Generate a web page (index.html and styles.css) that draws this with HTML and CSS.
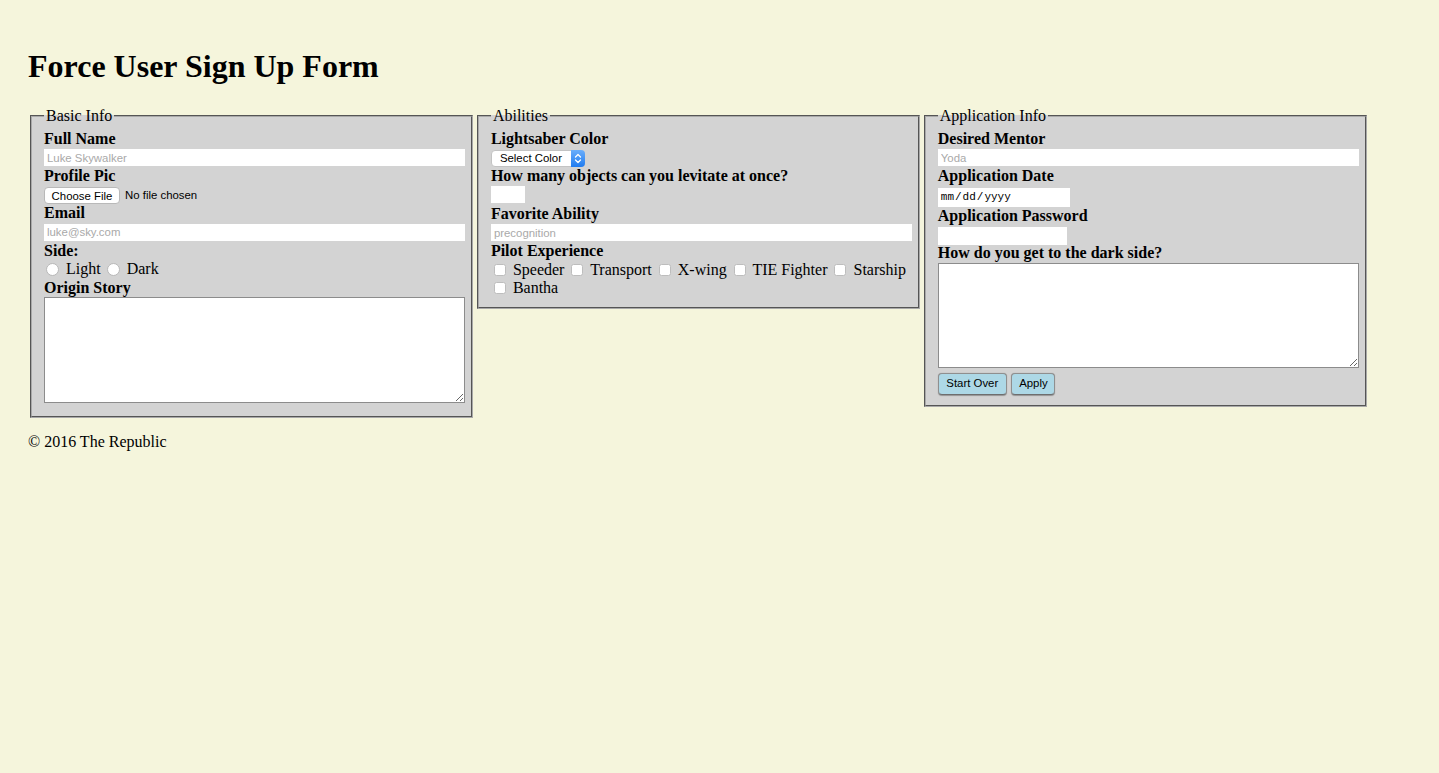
FILE: index.html
```html
<!DOCTYPE html>
<html lang="en">
<head>
<meta charset="utf-8">
<title>Force User Sign Up Form</title>
<link rel="stylesheet" href="styles.css">
</head>
<body>
<h1 class="title">Force User Sign Up Form</h1>
<form class="form">
  <fieldset class="group group-basic">
    <legend class="legend">Basic Info</legend>
    <label class="lbl" for="fullname">Full Name</label>
    <div class="row row-text"><input class="txt" id="fullname" type="text" placeholder="Luke Skywalker"></div>
    <label class="lbl">Profile Pic</label>
    <div class="row row-file"><button type="button" class="filebtn">Choose File</button><span class="filename">No file chosen</span></div>
    <label class="lbl" for="email">Email</label>
    <div class="row row-text"><input class="txt" id="email" type="email" placeholder="luke@sky.com"></div>
    <label class="lbl">Side:</label>
    <div class="opts"><input class="radio" type="radio" name="side" id="light"> <label for="light" class="optlbl">Light</label> <input class="radio" type="radio" name="side" id="dark"> <label for="dark" class="optlbl">Dark</label></div>
    <label class="lbl" for="origin">Origin Story</label>
    <textarea class="area area-origin" id="origin"></textarea>
  </fieldset>

  <fieldset class="group group-abilities">
    <legend class="legend">Abilities</legend>
    <label class="lbl" for="color">Lightsaber Color</label>
    <div class="row row-select">
      <span class="selectwrap">
        <select class="sel" id="color"><option>Select Color</option><option>Blue</option><option>Green</option><option>Red</option></select>
        <svg class="stepper" width="14" height="17" viewBox="0 0 14 17" aria-hidden="true">
          <defs><linearGradient id="sg" x1="0" y1="0" x2="0" y2="1"><stop offset="0" stop-color="#6aaefb"/><stop offset="1" stop-color="#1f7bf0"/></linearGradient></defs>
          <path d="M0 0 H10 A4 4 0 0 1 14 4 V13 A4 4 0 0 1 10 17 H0 Z" fill="url(#sg)"/>
          <path d="M4.5 7 L7 4.5 L9.5 7 M4.5 10 L7 12.5 L9.5 10" fill="none" stroke="#fff" stroke-width="1.3" stroke-linecap="round" stroke-linejoin="round"/>
        </svg>
      </span>
    </div>
    <label class="lbl" for="levitate">How many objects can you levitate at once?</label>
    <div class="row row-num"><input class="num" id="levitate" type="number"></div>
    <label class="lbl" for="ability">Favorite Ability</label>
    <div class="row row-text"><input class="txt" id="ability" type="text" placeholder="precognition"></div>
    <label class="lbl">Pilot Experience</label>
    <div class="opts checks"><input class="check" type="checkbox" id="c1"> <label for="c1" class="optlbl">Speeder</label> <input class="check" type="checkbox" id="c2"> <label for="c2" class="optlbl">Transport</label> <input class="check" type="checkbox" id="c3"> <label for="c3" class="optlbl">X-wing</label> <input class="check" type="checkbox" id="c4"> <label for="c4" class="optlbl">TIE Fighter</label> <input class="check" type="checkbox" id="c5"> <label for="c5" class="optlbl">Starship</label><br><input class="check" type="checkbox" id="c6"> <label for="c6" class="optlbl">Bantha</label></div>
  </fieldset>

  <fieldset class="group group-app">
    <legend class="legend">Application Info</legend>
    <label class="lbl" for="mentor">Desired Mentor</label>
    <div class="row row-text"><input class="txt" id="mentor" type="text" placeholder="Yoda"></div>
    <label class="lbl">Application Date</label>
    <div class="row row-date"><div class="date"><span>mm</span><span class="slash">/</span><span>dd</span><span class="slash">/</span><span>yyyy</span></div></div>
    <label class="lbl" for="pw">Application Password</label>
    <div class="row row-pw"><input class="pw" id="pw" type="password"></div>
    <label class="lbl" for="dark-q">How do you get to the dark side?</label>
    <textarea class="area area-dark" id="dark-q"></textarea>
    <div class="actions"><button type="reset" class="btn btn-reset">Start Over</button><button type="submit" class="btn btn-apply">Apply</button></div>
  </fieldset>
</form>
<footer class="footer">© 2016 The Republic</footer>
</body>
</html>
```
FILE: styles.css
```css
html, body {
  margin: 0;
  background: #f5f5dc;
}
body {
  padding: 25px 28px 0;
  font-family: "Liberation Serif", "Times New Roman", serif;
  font-size: 16px;
  line-height: 18.5px;
  color: #000;
}
.title {
  font-size: 32px;
  line-height: 37px;
  font-weight: bold;
  margin: 23px 0 19.9px;
}
.form {
  display: flex;
  align-items: flex-start;
}
.group {
  width: 30%;
  box-sizing: content-box;
  margin: 2px;
  padding: 5px 12px 10px;
  border: 2px groove #a9a9a9;
  background: #d3d3d3;
  min-width: 0;
}
.legend {
  padding: 0 2px;
  line-height: 18px;
  font-size: 16px;
}
.lbl {
  display: block;
  font-weight: bold;
  line-height: 18.5px;
}
.row { display: block; }
.row-text { height: 18px; }
.txt {
  display: block;
  width: 100%;
  box-sizing: content-box;
  height: 15px;
  margin: 1px 0 0;
  padding: 0 2px;
  border: 1px solid #fff;
  background: #fff;
  font-family: "Liberation Sans", Arial, sans-serif;
  font-size: 11.4px;
  color: #000;
  outline: none;
}
.txt::placeholder { color: #a9a9a9; }
.row-file {
  display: flex;
  align-items: flex-start;
  gap: 5px;
  height: 18.3px;
  padding-top: 1.5px;
  box-sizing: border-box;
}
.filebtn {
  height: 16.6px;
  width: 76px;
  box-sizing: border-box;
  padding: 0;
  border: 1px solid #b9b9b9;
  border-radius: 4px;
  background: #fff;
  font-family: "Liberation Sans", Arial, sans-serif;
  font-size: 11.4px;
  line-height: 14px;
  color: #000;
}
.filename {
  font-family: "Liberation Sans", Arial, sans-serif;
  font-size: 11.4px;
  line-height: 16.6px;
}
.opts {
  line-height: 18.5px;
  white-space: nowrap;
}
.checks { line-height: 18px; }
.radio {
  appearance: none;
  -webkit-appearance: none;
  width: 13px;
  height: 13px;
  margin: 0 3px 0 2px;
  box-sizing: border-box;
  border: 1px solid #b8b8b8;
  border-radius: 50%;
  background: #fff;
  vertical-align: -2px;
}
.check {
  appearance: none;
  -webkit-appearance: none;
  width: 12px;
  height: 12px;
  margin: 0 3px;
  box-sizing: border-box;
  border: 1px solid #bdbdbd;
  border-radius: 2.5px;
  background: #fff;
  vertical-align: -1px;
}
.area {
  display: block;
  width: 100%;
  box-sizing: content-box;
  padding: 2px;
  border: 1px solid #8c8c8c;
  background: #fff;
  font-family: "Liberation Mono", monospace;
  font-size: 13px;
}
.area-origin {
  height: 100px;
  margin-bottom: 3px;
}
.area-dark {
  height: 99.4px;
}
.row-select {
  height: 18.5px;
  padding-top: 1.5px;
  box-sizing: border-box;
}
.selectwrap {
  position: relative;
  display: block;
  width: 94px;
  height: 17px;
}
.sel {
  appearance: none;
  -webkit-appearance: none;
  display: block;
  width: 94px;
  height: 17px;
  box-sizing: border-box;
  margin: 0;
  padding: 0 0 0 8px;
  border: 1px solid #c3c3c3;
  border-radius: 4px;
  background: #fff;
  font-family: "Liberation Sans", Arial, sans-serif;
  font-size: 11.4px;
  line-height: 15px;
  color: #000;
}
.stepper {
  position: absolute;
  right: 0;
  top: 0;
}
.row-num { height: 18.5px; }
.num {
  display: block;
  width: 34px;
  height: 17px;
  box-sizing: border-box;
  margin: 1px 0 0;
  padding: 0 2px;
  border: 1px solid #fff;
  background: #fff;
  outline: none;
}
.row-date {
  height: 21px;
  padding-top: 2px;
  box-sizing: border-box;
}
.date {
  width: 132px;
  height: 19px;
  box-sizing: border-box;
  padding: 0 0 0 3px;
  background: #fff;
  font-family: "Liberation Mono", "Courier New", monospace;
  font-size: 11px;
  line-height: 19px;
  display: flex;
  align-items: center;
}
.slash { margin: 0 1px; }
.row-pw {
  height: 19px;
  padding-top: 2px;
  box-sizing: border-box;
}
.pw {
  display: block;
  width: 129px;
  height: 17.3px;
  box-sizing: border-box;
  margin: 0;
  padding: 0 2px;
  border: 1px solid #fff;
  background: #fff;
  outline: none;
}
.actions {
  display: flex;
  gap: 4.6px;
  margin-top: 5px;
}
.btn {
  height: 21.3px;
  box-sizing: border-box;
  padding: 0;
  border: 1px solid #8f8f8f;
  border-bottom-color: #6e6e6e;
  border-radius: 4px;
  background: #add8e6;
  box-shadow: 0 0.5px 1px rgba(0,0,0,0.3);
  font-family: "Liberation Sans", Arial, sans-serif;
  font-size: 11.4px;
  line-height: 19px;
  color: #000;
}
.btn-reset { width: 69px; }
.btn-apply { width: 44px; }
.footer {
  margin-top: 13px;
  line-height: 18.5px;
}
```
